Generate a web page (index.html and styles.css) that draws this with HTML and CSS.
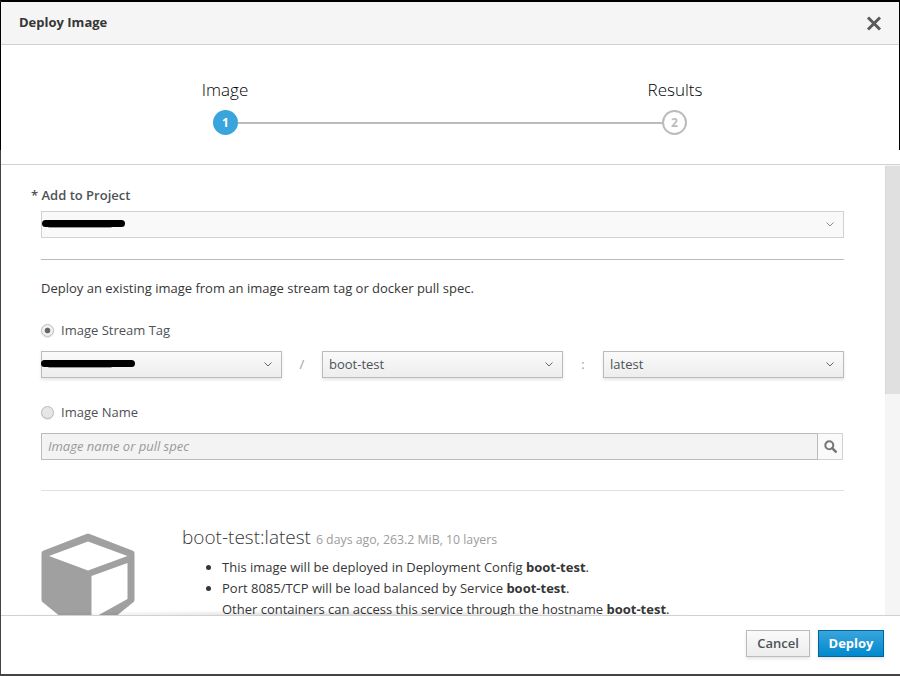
FILE: index.html
```html
<!doctype html>
<html>
<head>
<meta charset="utf-8">
<title>Deploy Image</title>
<link rel="stylesheet" href="styles.css">
</head>

<body>
	<div class="modal">
		<div class="modal-head">
			<h4>Deploy Image</h4>
			<svg class="close" width="16" height="15" viewBox="0 0 16 15"><path d="M2 1.500L14 13.500M14 1.500L2 13.500" stroke="#5a5a5a" stroke-width="3" fill="none"/></svg>
		</div>

		<div class="wizard">
			<div class="wizard-labels">
				<span>Image</span>
				<span>Results</span>
			</div>
			<div class="wizard-track">
				<span class="step active">1</span>
				<span class="line"></span>
				<span class="step">2</span>
			</div>
		</div>

		<div class="modal-body">
			<div class="content">
				<label class="project-label">* Add to Project</label>
				<div class="select flat">
					<span class="smudge"></span>
					<span class="blob"></span>
					<svg class="chev" width="8" height="5" viewBox="0 0 8 5"><path d="M.5.500L4 4l3.500-3.500" stroke="#8a8a8a" fill="none"/></svg>
				</div>
				<hr class="rule">
				<p class="intro">Deploy an existing image from an image stream tag or docker pull spec.</p>

				<label class="radio first"><input type="radio" name="src" checked>Image Stream Tag</label>
				<div class="select-row">
					<div class="select">
						<span class="smudge"></span>
						<span class="blob wide"></span>
						<svg class="chev" width="8" height="5" viewBox="0 0 8 5"><path d="M.5.500L4 4l3.500-3.500" stroke="#666" fill="none"/></svg>
					</div>
					<span class="sep">/</span>
					<div class="select">boot-test
						<svg class="chev" width="8" height="5" viewBox="0 0 8 5"><path d="M.5.500L4 4l3.500-3.500" stroke="#666" fill="none"/></svg>
					</div>
					<span class="sep">:</span>
					<div class="select">latest
						<svg class="chev" width="8" height="5" viewBox="0 0 8 5"><path d="M.5.500L4 4l3.500-3.500" stroke="#666" fill="none"/></svg>
					</div>
				</div>

				<label class="radio second"><input type="radio" name="src">Image Name</label>
				<div class="input-group">
					<input type="text" placeholder="Image name or pull spec" disabled>
					<span class="search-btn">
						<svg width="13" height="13" viewBox="0 0 14 14"><circle cx="5.700" cy="5.700" r="4.300" stroke="#777" stroke-width="2.200" fill="none"/><path d="M8.800 8.800L12.600 12.600" stroke="#777" stroke-width="2.800" stroke-linecap="round"/></svg>
					</span>
				</div>
				<hr class="rule light">

				<div class="media">
					<svg class="cube" width="94" height="108" viewBox="0 0 94 108">
						<path d="M47 3L91 20V67L47 103L3 67V20Z" fill="#a0a0a0" stroke="#a0a0a0" stroke-width="5" stroke-linejoin="round"/>
						<path d="M8 23L47 8.500L86.500 23L47 37.500Z" fill="#fff"/>
						<path d="M50.500 43L86.500 30V66L50.500 86Z" fill="#fff"/>
					</svg>
					<div class="media-text">
						<h3>boot-test:latest <small>6 days ago, 263.2 MiB, 10 layers</small></h3>
						<ul>
							<li>This image will be deployed in Deployment Config <b>boot-test</b>.</li>
							<li>Port 8085/TCP will be load balanced by Service <b>boot-test</b>.<br>Other containers can access this service through the hostname <b>boot-test</b>.</li>
						</ul>
					</div>
				</div>
			</div>
			<div class="scrollbar"><div class="thumb"></div></div>
		</div>

		<div class="modal-foot">
			<button class="btn">Cancel</button>
			<button class="btn primary">Deploy</button>
		</div>
	</div>
</body>

</html>
```

FILE: styles.css
```css
*{
	box-sizing: border-box;
}
html, body{
	height: 100%;
}
body{
	margin: 0;
	background: #fff;
	color: #363636;
	font: 13px/21px "Open Sans", "Liberation Sans", sans-serif;
}
.modal{
	height: 676px;
	display: flex;
	flex-direction: column;
	position: relative;
	border-top: 2px solid #000;
	border-bottom: 2px solid #444;
	border-left: 1px solid #444;
}
.modal:before, .modal:after{
	content: "";
	position: absolute;
	top: 0;
	width: 1px;
	height: 148px;
	background: #000;
}
.modal:before{
	left: -1px;
}
.modal:after{
	right: 0;
}

.modal-head{
	height: 43px;
	flex: none;
	display: flex;
	align-items: center;
	justify-content: space-between;
	padding: 0 18px 0 18px;
	background: #f5f5f5;
	border-bottom: 1px solid #d1d1d1;
}
.modal-head h4{
	margin: -2px 0 0 0;
	font-size: 13px;
	font-weight: 700;
	color: #363636;
}
.close{
	margin-top: 1px;
}

.wizard{
	height: 120px;
	flex: none;
	padding: 34px 213px 0 212px;
	border-bottom: 1px solid #d1d1d1;
}
.wizard-labels{
	display: flex;
	justify-content: space-between;
	margin: 0 -38px;
	font-size: 17px;
	font-weight: 300;
	line-height: 22px;
	color: #000;
}
.wizard-labels span{
	width: 100px;
	text-align: center;
}
.wizard-track{
	display: flex;
	align-items: center;
	margin: 9px 0 0 0;
}
.step{
	width: 25px;
	height: 25px;
	flex: none;
	display: flex;
	align-items: center;
	justify-content: center;
	border: 2px solid #bbb;
	border-radius: 50%;
	background: #fff;
	color: #bbb;
	font-size: 12px;
	font-weight: 700;
	line-height: 1;
}
.step.active{
	background: #39a5dc;
	border-color: #39a5dc;
	color: #fff;
}
.line{
	flex: 1;
	height: 2px;
	background: #bbb;
}

.modal-body{
	flex: 1;
	min-height: 0;
	display: flex;
	overflow: hidden;
}
.content{
	flex: 1;
	min-width: 0;
	padding: 20px 41px 0 40px;
}
.scrollbar{
	width: 15px;
	flex: none;
	background: #f5f5f5;
}
.thumb{
	height: 228px;
	margin-top: 1px;
	background: #e0e0e0;
	border-left: 1px solid #d8d8d8;
}

.project-label{
	display: block;
	margin: 0 0 6px -10px;
	height: 20px;
	line-height: 20px;
	font-weight: 600;
	color: #4d5258;
}
.select{
	flex: 1;
	min-width: 0;
	height: 27px;
	display: flex;
	align-items: center;
	justify-content: space-between;
	position: relative;
	padding: 0 9px 0 6px;
	border: 1px solid #bbb;
	background: linear-gradient(#fafafa, #ededed);
	box-shadow: 0 2px 3px rgba(3,3,3,.1);
	color: #4d5258;
}
.select.flat{
	flex: none;
	background: #f9f9f9;
	border-color: #d1d1d1;
	box-shadow: none;
}
.chev{
	margin-left: auto;
	flex: none;
}
.blob{
	position: absolute;
	left: 0;
	top: 8px;
	width: 83px;
	height: 7px;
	background: #000;
	border-radius: 4px;
}
.blob.wide{
	left: -1px;
	width: 94px;
}
.smudge{
	position: absolute;
	left: 6px;
	top: 13px;
	width: 64px;
	height: 3px;
	background: #999;
	border-radius: 2px;
}

.rule{
	margin: 21px 0 0 0;
	border: 0;
	height: 1px;
	background: #bbb;
}
.rule.light{
	margin-top: 30px;
	background: #e0e0e0;
}
.intro{
	margin: 18px 0 0 0;
}
.radio{
	display: flex;
	align-items: center;
	height: 20px;
	color: #4d5258;
}
.radio.first{
	margin-top: 21px;
}
.radio.second{
	margin-top: 24px;
}
.radio input{
	appearance: none;
	width: 13px;
	height: 13px;
	margin: 0 7px 0 0;
	border: 1px solid #bbb;
	border-radius: 50%;
	background: #e6e6e6;
	box-shadow: 0 1px 1px rgba(0,0,0,.1);
}
.radio input:checked{
	background: radial-gradient(circle, #666 0, #666 2.500px, #f0f0f0 3.200px);
}
.select-row{
	display: flex;
	align-items: center;
	margin-top: 11px;
}
.sep{
	width: 40px;
	flex: none;
	text-align: center;
	color: #9c9c9c;
}
.input-group{
	display: flex;
	height: 27px;
	margin-top: 11px;
	margin-right: 1px;
}
.input-group input{
	flex: 1;
	min-width: 0;
	height: 27px;
	padding: 0 6px 2px 6px;
	border: 1px solid #bbb;
	background: #f3f3f3;
	font: italic 13px "Open Sans", "Liberation Sans", sans-serif;
}
.input-group input::placeholder{
	color: #999;
	opacity: 1;
}
.search-btn{
	width: 25px;
	flex: none;
	display: flex;
	align-items: center;
	justify-content: center;
	border: 1px solid #d1d1d1;
	border-left: 0;
	background: #fafafa;
}

.media{
	display: flex;
	margin-top: 33px;
}
.cube{
	flex: none;
	margin: 9px 47px 0 0;
}
.media-text h3{
	margin: 0;
	font-size: 19px;
	font-weight: 300;
	line-height: 26px;
	color: #363636;
}
.media-text small{
	font-size: 12.300px;
	font-weight: 400;
	color: #9c9c9c;
}
.media-text ul{
	margin: 4px 0 0 0;
	padding: 0 0 0 40px;
}

.modal-foot{
	height: 59px;
	flex: none;
	position: relative;
	display: flex;
	justify-content: flex-end;
	align-items: flex-start;
	gap: 8px;
	padding: 14px 16px 0 0;
	background: #fff;
	border-top: 1px solid #d1d1d1;
}
.modal-foot:before{
	content: "";
	position: absolute;
	left: 0;
	right: 200px;
	top: -6px;
	height: 5px;
	background: radial-gradient(ellipse at 50% 100%, rgba(0,0,0,.14), rgba(0,0,0,0) 70%);
}
.btn{
	height: 27px;
	width: 64px;
	padding: 0 0 2px 0;
	border: 1px solid #bbb;
	background: linear-gradient(#fafafa, #ededed);
	box-shadow: 0 2px 3px rgba(3,3,3,.1);
	color: #4d5258;
	font: 600 13px "Open Sans", "Liberation Sans", sans-serif;
}
.btn.primary{
	width: 66px;
	border-color: #00659c;
	background: linear-gradient(#39a5dc, #0088ce);
	color: #fff;
	font-weight: 700;
}
```
